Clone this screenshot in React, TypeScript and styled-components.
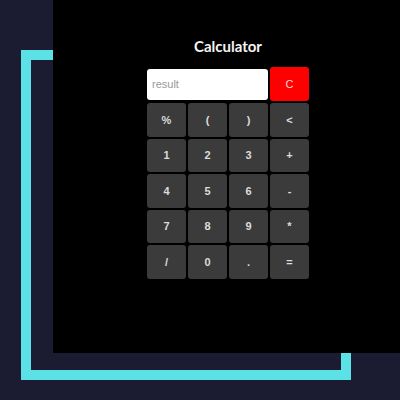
import React from "react";
import styled, { createGlobalStyle } from "styled-components";

const Global = createGlobalStyle`
  html, body { margin: 0; padding: 0; }
  body {
    background: #1b1b32;
    width: 400px;
    height: 400px;
    overflow: hidden;
    font-family: "Liberation Sans", Arial, sans-serif;
  }
`;

const Stage = styled.div`
  position: relative;
  width: 400px;
  height: 400px;
  background: #1b1b32;
  overflow: hidden;
`;

const Frame = styled.div`
  position: absolute;
  left: 21px;
  top: 50px;
  width: 330px;
  height: 330px;
  box-sizing: border-box;
  border: 10px solid #5ce1e6;
`;

const Panel = styled.div`
  position: absolute;
  left: 53px;
  top: 0;
  width: 350px;
  height: 353px;
  background: #000;
  display: flex;
  flex-direction: column;
  align-items: center;
`;

const Title = styled.h1`
  margin: 37px 0 0;
  font-family: Lato, "Open Sans", sans-serif;
  font-weight: 700;
  font-size: 15px;
  line-height: 18px;
  color: #f4f4f4;
`;

const Calc = styled.div`
  margin-top: 12px;
  display: flex;
  flex-direction: column;
  gap: 2px;
`;

const TopRow = styled.div`
  display: flex;
  align-items: center;
  gap: 2px;
`;

const Display = styled.input`
  box-sizing: border-box;
  width: 121px;
  height: 31px;
  border: none;
  border-radius: 3px;
  background: #fff;
  padding: 0 5px;
  font-family: "Liberation Sans", Arial, sans-serif;
  font-size: 11px;
  color: #333;
  outline: none;
  &::placeholder { color: #999; }
`;

const Grid = styled.div`
  display: grid;
  grid-template-columns: repeat(4, 39px);
  grid-auto-rows: 33.5px;
  gap: 2px 2px;
`;

const Key = styled.button<{ $tone?: "red" }>`
  box-sizing: border-box;
  width: 39px;
  height: ${(p) => (p.$tone === "red" ? "34px" : "33.5px")};
  border: none;
  border-radius: 3px;
  background: ${(p) => (p.$tone === "red" ? "#ff0000" : "#3b3b3b")};
  color: ${(p) => (p.$tone === "red" ? "#ffd6d6" : "#dcdcdc")};
  font-family: "Liberation Sans", Arial, sans-serif;
  font-size: 11px;
  font-weight: ${(p) => (p.$tone === "red" ? 400 : 700)};
  padding: 0;
  display: flex;
  align-items: center;
  justify-content: center;
`;

const keys = ["%", "(", ")", "<", "1", "2", "3", "+", "4", "5", "6", "-", "7", "8", "9", "*", "/", "0", ".", "="];

export default function App() {
  return (
    <>
      <Global />
      <Stage>
        <Frame />
        <Panel>
          <Title>Calculator</Title>
          <Calc>
            <TopRow>
              <Display placeholder="result" readOnly />
              <Key $tone="red">C</Key>
            </TopRow>
            <Grid>
              {keys.map((k) => (
                <Key key={k}>{k}</Key>
              ))}
            </Grid>
          </Calc>
        </Panel>
      </Stage>
    </>
  );
}
